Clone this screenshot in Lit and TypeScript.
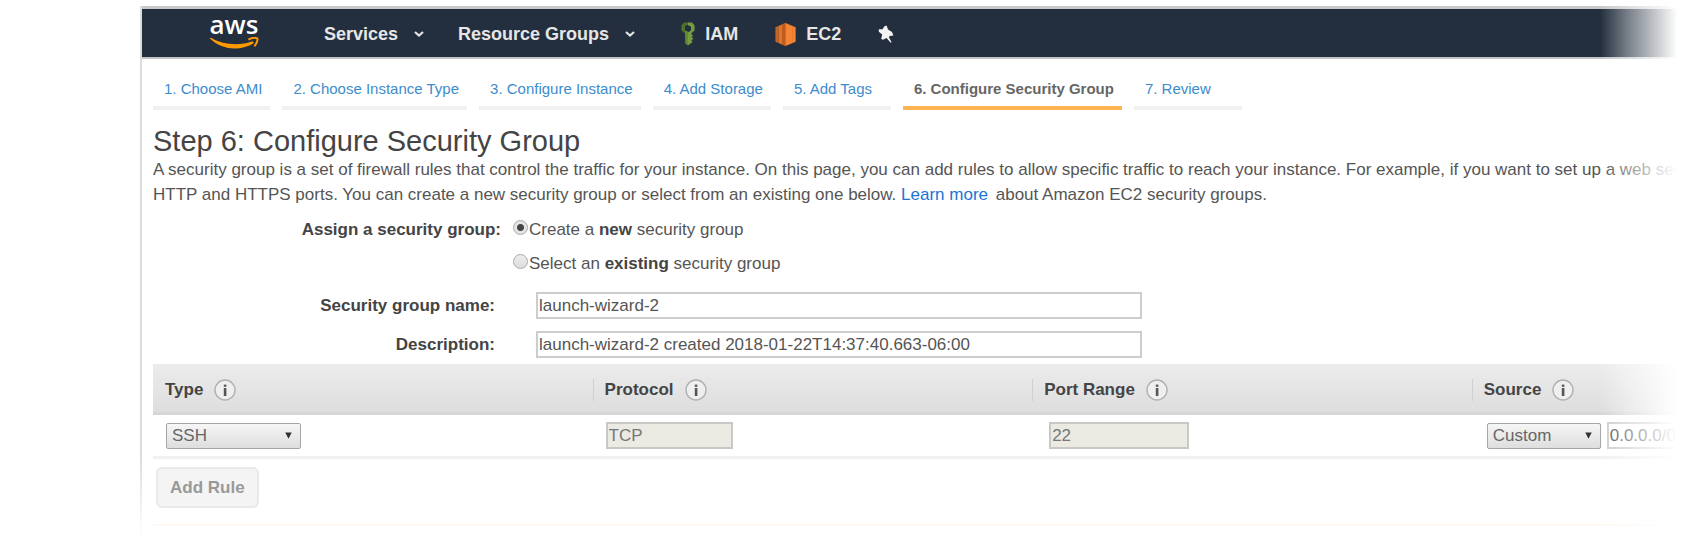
import { LitElement, html, css, svg } from "lit";
import { customElement, property, state } from "lit/decorators.js";
import { classMap } from "lit/directives/class-map.js";

const chevron = svg`<svg class="chevron" viewBox="0 0 12 8" width="12" height="8" aria-hidden="true">
  <path d="M2 2 L6 5.6 L10 2" fill="none" stroke="#e4e4e4" stroke-width="2.2"/>
</svg>`;

@customElement("info-icon")
export class InfoIcon extends LitElement {
  static styles = css`
    :host { display: inline-flex; }
  `;
  render() {
    return html`<svg width="22" height="22" viewBox="0 0 22 22" role="img" aria-label="Info">
      <circle cx="11" cy="11" r="10" fill="#efefef" stroke="#b0b0b0" stroke-width="1.4"/>
      <rect x="9.8" y="5.6" width="2.6" height="2.2" fill="#555"/>
      <rect x="9.8" y="9" width="2.6" height="8" fill="#555"/>
    </svg>`;
  }
}

@customElement("drop-down")
export class DropDown extends LitElement {
  @property() label = "";
  @property({ type: Array }) options: string[] = [];
  static styles = css`
    :host { display: inline-grid; }
    .box {
      grid-area: 1 / 1;
      appearance: none;
      box-sizing: border-box;
      width: 100%;
      height: 26px;
      margin: 0;
      padding: 0 24px 0 5px;
      border: 1px solid #a6a6a6;
      border-radius: 2px;
      background: linear-gradient(#f6f6f6, #dedede);
      color: #666;
      font: 17px "Liberation Sans", Arial, sans-serif;
    }
    .arrow {
      grid-area: 1 / 1;
      align-self: center;
      justify-self: end;
      margin-right: 9px;
      pointer-events: none;
    }
  `;
  render() {
    return html`<select class="box" aria-label=${this.label}>
        ${this.options.map((o) => html`<option>${o}</option>`)}
      </select>
      <svg class="arrow" width="7" height="7" viewBox="0 0 8 8" aria-hidden="true">
        <path d="M0.3 0.6H7.7L4 7.8Z" fill="#333"/>
      </svg>`;
  }
}

@customElement("console-nav")
export class ConsoleNav extends LitElement {
  static styles = css`
    :host { display: block; }
    .bar {
      display: flex;
      align-items: center;
      height: 46px;
      padding: 2px 0 0 67px;
      background: #232f3e;
      border-top: 3px solid #c6c8ca;
      border-bottom: 2px solid #c2c4c7;
      font: bold 18px/24px "Liberation Sans", Arial, sans-serif;
      white-space: nowrap;
    }
    .item {
      display: flex;
      align-items: center;
      padding: 0;
      border: 0;
      background: none;
      color: #e6e6e6;
      font: inherit;
      text-decoration: none;
    }
    .logo {
      flex-direction: column;
      width: 50px;
      margin-right: 65px;
      padding-bottom: 6px;
    }
    .word {
      font: 600 26px/24px "Open Sans", "Noto Sans", sans-serif;
      color: #fff;
      height: 25px;
    }
    .menu { gap: 15px; margin-right: 33px; }
    .icon { margin-right: 10px; }
    .iam { margin-left: 12px; margin-right: 37px; }
    .ec2 { margin-right: 37px; }
  `;
  render() {
    return html`<nav class="bar">
      <a class="item logo" href="#" aria-label="AWS">
        <span class="word">aws</span>
        <svg width="50" height="13" viewBox="0 0 50 13" aria-hidden="true">
          <path d="M0.4 1L2.6 1C14 8.4 32 8.8 43.6 4.2L45 6C32 14.4 13 13.6 0.4 1Z" fill="#f90"/>
          <path d="M39.4 2.6C42.6 0.6 46 0.6 48.4 1.4C48.8 4.2 47.6 7 45.4 9.2" fill="none" stroke="#f90" stroke-width="2"/>
        </svg>
      </a>
      <button class="item menu">Services ${chevron}</button>
      <button class="item menu">Resource Groups ${chevron}</button>
      <a class="item iam" href="#">
        <svg class="icon" width="14" height="24" viewBox="0 0 14 24" aria-hidden="true">
          <path d="M3 0.6L0.4 3.6V8.6L4 11.2V21L6.6 23.6V11L4 8.4V4L7 2.8V0.6Z" fill="#4c7328"/>
          <path d="M7 0.6H11L13.6 3.6V8.6L10.4 11.2V12.6L12.4 13.6L10.4 15L12.4 16.6L10.4 18.4L11.6 20L7 23.6V10.6L10 8.2V4.4L7 3.2Z" fill="#759c3e"/>
          <path d="M4 8.4L7 9.6V23.4L4.6 21.4Z" fill="#5f8a33"/>
        </svg>
        IAM
      </a>
      <a class="item ec2" href="#">
        <svg class="icon" width="21" height="23" viewBox="0 0 21 23" aria-hidden="true">
          <path d="M0.4 4.2L3.4 3V20L0.4 18.8Z" fill="#c8621f"/>
          <path d="M3.4 3L10.5 0V23L3.4 20Z" fill="#e0742a"/>
          <path d="M7 1.5L10.5 0V23L7 21.5Z" fill="#bd5c1d"/>
          <path d="M10.5 0L20.6 4.2V18.8L10.5 23Z" fill="#f58534"/>
          <path d="M17.6 3V20" stroke="#e87a2c" stroke-width="1"/>
        </svg>
        EC2
      </a>
      <button class="item" aria-label="Pin shortcuts">
        <svg width="16" height="18" viewBox="0 0 16 18" aria-hidden="true">
          <path d="M6.2 1.6L8.6 0.4L10 4.6L14 7L15.4 10.4L11.6 11L11 12.4L13.6 17.2L12.4 17.4L8.6 13L5 14.8L3.2 14L4.2 9.4L0.8 6.8L0.8 4.2L4.6 4.2Z" fill="#f4f4f4"/>
        </svg>
      </button>
    </nav>`;
  }
}

@customElement("app-root")
export class AppRoot extends LitElement {
  @state() private mode = "new";

  private steps = [
    "1. Choose AMI",
    "2. Choose Instance Type",
    "3. Configure Instance",
    "4. Add Storage",
    "5. Add Tags",
    "6. Configure Security Group",
    "7. Review",
  ];

  static styles = css`
    :host {
      display: block;
      position: relative;
      box-sizing: border-box;
      padding: 6px 0 0 140px;
      overflow: hidden;
      background: #fff;
      color: #555;
      font: 17px/25px "Liberation Sans", Arial, sans-serif;
    }
    .frame {
      border-left: 2px solid;
      border-image: linear-gradient(#dcdcdc 85%, #fff) 1;
    }
    .content { padding: 0 0 10px 11px; }
    a { color: #2074d5; text-decoration: none; }
    .steps {
      display: flex;
      gap: 12px;
      margin: 0;
      padding: 18px 0 0;
      list-style: none;
      font-size: 15px;
      line-height: 24px;
      white-space: nowrap;
    }
    .step {
      box-sizing: border-box;
      min-width: 108px;
      padding: 0 8px 5px 11px;
      border-bottom: 4px solid #f1f1f1;
    }
    .step a { color: #3d8ccc; }
    .step.current { border-color: #ffb452; font-weight: bold; }
    .step.current a { color: #666; }
    h1 {
      margin: 16px 0 0;
      color: #444;
      font-size: 29px;
      font-weight: normal;
      line-height: 31px;
    }
    .intro { margin: 0; white-space: nowrap; }
    .intro a { margin-right: 3px; }
    .form { display: grid; margin: 0; padding-top: 5px; }
    fieldset { display: contents; }
    .row { display: flex; align-items: center; }
    .choice { height: 34px; }
    .choice + .choice { margin-bottom: 6px; }
    .field { height: 39px; }
    .name {
      box-sizing: border-box;
      width: 348px;
      color: #444;
      font-weight: bold;
      text-align: right;
    }
    .field .name { width: 342px; margin-right: 41px; }
    .choice .name { margin-right: 12px; }
    b { color: #444; }
    .radio {
      appearance: none;
      box-sizing: border-box;
      width: 15px;
      height: 15px;
      margin: 0 1px 4px 0;
      border: 1px solid #aaa;
      border-radius: 50%;
      background: linear-gradient(#eee, #ddd);
    }
    .radio:checked { background: radial-gradient(circle, #444 3px, #e4e4e4 4px); }
    .text {
      box-sizing: border-box;
      height: 27px;
      margin: 0;
      padding: 0 1px;
      border: 2px solid #cdcdcd;
      background: #fff;
      color: #555;
      font: inherit;
    }
    .wide { width: 606px; }
    .text:disabled { border-color: #c8c8c4; background: #ebebe4; color: #777; }
    table {
      width: 115%;
      border-collapse: collapse;
      table-layout: fixed;
    }
    th {
      box-sizing: border-box;
      height: 51px;
      padding: 0;
      color: #444;
      text-align: left;
    }
    thead tr { background: linear-gradient(#ececec, #dedede 92%, #d6d6d6 96%); }
    .head { display: flex; align-items: center; gap: 11px; padding-left: 12px; line-height: 22px; }
    th + th .head { padding-left: 11px; border-left: 1px solid #d0d0d0; }
    td { height: 41px; padding: 0 0 0 13px; border-bottom: 3px solid #f1f1f1; }
    td.port { padding-left: 17px; }
    td:last-child { padding-left: 15px; }
    .cell { display: flex; align-items: center; gap: 6px; }
    .type { width: 135px; }
    .source { width: 114px; }
    .protocol { width: 127px; }
    .range { width: 140px; }
    .add {
      display: block;
      height: 41px;
      margin: 8px 0 16px 3px;
      padding: 0 12px;
      border: 2px solid #e9e9e9;
      border-radius: 6px;
      background: #f4f4f4;
      color: #999;
      font: bold 17px "Liberation Sans", Arial, sans-serif;
    }
    .rule { margin: 0; border: 0; border-top: 2px solid #fff8f2; }
    .fade {
      position: absolute;
      top: 0;
      right: 0;
      bottom: 0;
      width: 82px;
      background: linear-gradient(to right, #fff0, #ffffff66 35%, #fff 94%);
      pointer-events: none;
    }
  `;

  private radio(id: string, word: string, before: string) {
    return html`<input class="radio" type="radio" name="mode" id=${id}
        .checked=${this.mode === id} @change=${() => (this.mode = id)} />
      <label for=${id}>${before} <b>${word}</b> security group</label>`;
  }

  render() {
    return html`
      <div class="frame">
        <console-nav></console-nav>
        <main class="content">
          <ol class="steps">
            ${this.steps.map(
              (s, i) => html`<li class=${classMap({ step: true, current: i === 5 })}><a href="#">${s}</a></li>`
            )}
          </ol>
          <h1>Step 6: Configure Security Group</h1>
          <p class="intro">
            A security group is a set of firewall rules that control the traffic for your instance. On this page, you can add rules to allow specific traffic to reach your instance. For example, if you want to set up a web server<br />
            HTTP and HTTPS ports. You can create a new security group or select from an existing one below.
            <a href="#">Learn more</a> about Amazon EC2 security groups.
          </p>
          <form class="form">
            <fieldset aria-label="Assign a security group">
              <div class="row choice"><span class="name">Assign a security group:</span>${this.radio("new", "new", "Create a")}</div>
              <div class="row choice"><span class="name"></span>${this.radio("existing", "existing", "Select an")}</div>
            </fieldset>
            <div class="row field">
              <label class="name" for="group">Security group name:</label>
              <input class="text wide" id="group" value="launch-wizard-2" />
            </div>
            <div class="row field">
              <label class="name" for="desc">Description:</label>
              <input class="text wide" id="desc" value="launch-wizard-2 created 2018-01-22T14:37:40.663-06:00" />
            </div>
          </form>
          <table>
            <thead>
              <tr>
                ${["Type", "Protocol", "Port Range", "Source"].map(
                  (h) => html`<th scope="col"><div class="head">${h}<info-icon></info-icon></div></th>`
                )}
              </tr>
            </thead>
            <tbody>
              <tr>
                <td><div class="cell"><drop-down class="type" label="Type" .options=${["SSH"]}></drop-down></div></td>
                <td><div class="cell"><input class="text protocol" aria-label="Protocol" value="TCP" disabled /></div></td>
                <td class="port"><div class="cell"><input class="text range" aria-label="Port range" value="22" disabled /></div></td>
                <td>
                  <div class="cell">
                    <drop-down class="source" label="Source" .options=${["Custom"]}></drop-down>
                    <input class="text range" aria-label="Source address" value="0.0.0.0/0" />
                  </div>
                </td>
              </tr>
            </tbody>
          </table>
          <button class="add">Add Rule</button>
          <hr class="rule" />
        </main>
      </div>
      <div class="fade"></div>
    `;
  }
}
